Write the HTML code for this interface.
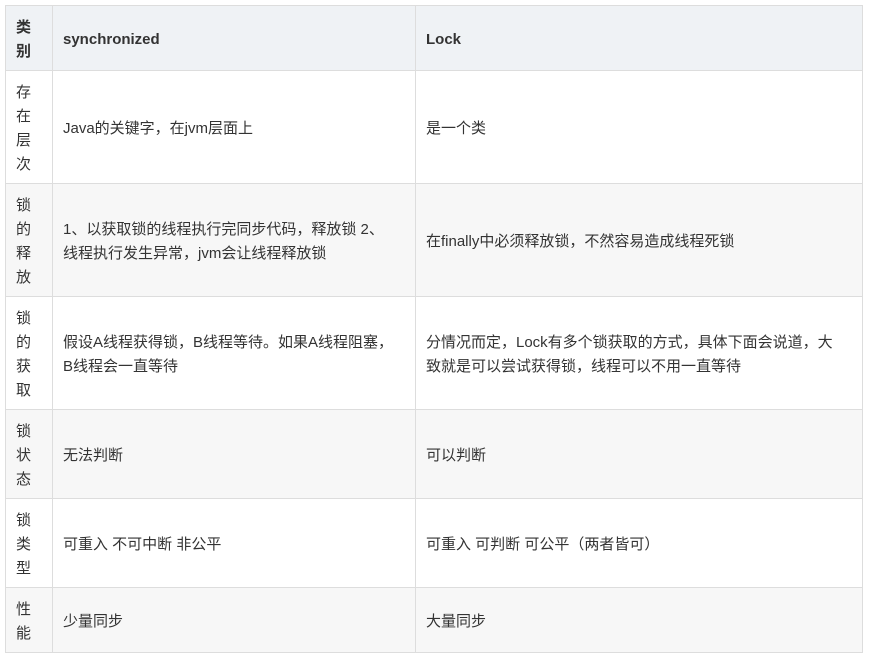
<!DOCTYPE html>
<html><head><meta charset="utf-8"><style>
body{margin:0;background:#fff;font-family:"Liberation Sans","Noto Sans CJK SC",sans-serif;font-size:15px;color:#333;}
table{position:absolute;left:5px;top:5px;border-collapse:collapse;table-layout:fixed;width:857px;}
td,th{border:1px solid #ddd;padding:3px 10px 0 10px;line-height:24px;vertical-align:middle;text-align:left;word-break:break-all;}
th{background:#eff2f5;font-weight:bold;font-size:15px;}
tr.a td{background:#f7f7f7;}
</style></head><body>
<table>
<colgroup><col style="width:47px"><col style="width:363px"><col style="width:447px"></colgroup>
<tr style="height:65px"><th>类别</th><th>synchronized</th><th>Lock</th></tr>
<tr style="height:113px"><td>存在层次</td><td>Java的关键字，在jvm层面上</td><td>是一个类</td></tr>
<tr class="a" style="height:113px"><td>锁的释放</td><td>1、以获取锁的线程执行完同步代码，释放锁 2、<br>线程执行发生异常，jvm会让线程释放锁</td><td>在finally中必须释放锁，不然容易造成线程死锁</td></tr>
<tr style="height:113px"><td>锁的获取</td><td>假设A线程获得锁，B线程等待。如果A线程阻塞，<br>B线程会一直等待</td><td>分情况而定，Lock有多个锁获取的方式，具体下面会说道，大<br>致就是可以尝试获得锁，线程可以不用一直等待</td></tr>
<tr class="a" style="height:89px"><td>锁状态</td><td>无法判断</td><td>可以判断</td></tr>
<tr style="height:89px"><td>锁类型</td><td>可重入 不可中断 非公平</td><td>可重入 可判断 可公平（两者皆可）</td></tr>
<tr class="a" style="height:65px"><td>性能</td><td>少量同步</td><td>大量同步</td></tr>
</table>
</body></html>
